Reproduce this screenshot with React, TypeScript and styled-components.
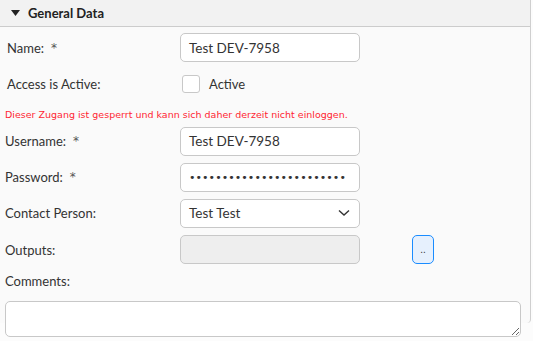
import React from "react";
import styled, { createGlobalStyle } from "styled-components";

const Global = createGlobalStyle`
  html, body { margin: 0; padding: 0; background: #fcfcfc; }
  body { font-family: Lato, "Noto Sans", sans-serif; color: #333; }
  #root { min-height: 341px; }
  * { box-sizing: border-box; }
`;

const Panel = styled.section`
  width: 531px;
  height: 323px;
  background: #fafafa;
  border-right: 1px solid #cfcfcf;
  border-bottom-right-radius: 4px;
`;

const Header = styled.div`
  height: 27px;
  background: #f2f2f2;
  border-bottom: 1px solid #cccccc;
  display: flex;
  align-items: center;
  padding-left: 11px;
  gap: 8px;
  font-size: 13px;
  font-weight: 700;
  color: #222;
`;

const Body = styled.div`
  padding: 6px 0 0 5px;
  display: flex;
  flex-direction: column;
`;

const Row = styled.div<{ $h: number }>`
  display: grid;
  grid-template-columns: 175px 180px auto;
  align-items: center;
  height: ${(p) => p.$h}px;
`;

const Label = styled.label<{ $shift?: number }>`
  font-size: 13px;
  color: #333;
  padding-left: ${(p) => p.$shift ?? 0}px;
  display: flex;
  align-items: center;
  gap: 7px;
`;

const Star = styled.span`
  font-family: "DejaVu Sans", sans-serif;
  font-size: 12px;
  color: #555;
`;

const Input = styled.div<{ $disabled?: boolean }>`
  height: 29px;
  border: 1px solid #c8c8c8;
  border-radius: 5px;
  background: ${(p) => (p.$disabled ? "#eeeeee" : "#ffffff")};
  display: flex;
  align-items: center;
  padding: 0 9px 0 8px;
  font-size: 13.5px;
  color: #333;
  justify-content: space-between;
`;

const Dots = styled.span`
  font-family: "DejaVu Sans", sans-serif;
  font-size: 11px;
  letter-spacing: 0.05px;
  color: #333;
`;

const CheckWrap = styled.div`
  display: flex;
  align-items: center;
  gap: 9px;
  padding-left: 2px;
  font-size: 13px;
`;

const Box = styled.span`
  width: 18px;
  height: 18px;
  border: 1px solid #c8c8c8;
  border-radius: 3px;
  background: #fff;
`;

const Error = styled.div`
  height: 18px;
  display: flex;
  align-items: center;
  font-family: "DejaVu Sans", Verdana, sans-serif;
  font-size: 9.5px;
  color: #ff1f33;
`;

const SmallBtn = styled.button`
  justify-self: start;
  margin-left: 52px;
  width: 22px;
  height: 29px;
  border: 1.5px solid #1a8cff;
  border-radius: 5px;
  background: #e6f0fd;
  font-size: 10px;
  color: #333;
  padding: 0;
  line-height: 1;
`;

const CommentsLabel = styled.div`
  font-size: 13px;
  height: 26px;
  display: flex;
  align-items: center;
  color: #333;
`;

const TextArea = styled.textarea`
  display: block;
  margin: 7px 0 0 0;
  padding: 0;
  width: 516px;
  height: 36px;
  min-height: 36px;
  flex-shrink: 0;
  border: 1px solid #c8c8c8;
  border-radius: 5px;
  background: #fff;
  resize: vertical;
`;

export default function App() {
  return (
    <>
      <Global />
      <Panel>
        <Header>
          <svg width="9" height="6" viewBox="0 0 9 6">
            <path d="M0 0 H9 L4.5 6 Z" fill="#222" />
          </svg>
          General Data
        </Header>
        <Body>
          <Row $h={29}>
            <Label $shift={2}>
              Name: <Star>*</Star>
            </Label>
            <Input>Test DEV-7958</Input>
          </Row>
          <Row $h={43}>
            <Label $shift={2}>Access is Active:</Label>
            <CheckWrap>
              <Box />
              Active
            </CheckWrap>
          </Row>
          <Error>Dieser Zugang ist gesperrt und kann sich daher derzeit nicht einloggen.</Error>
          <Row $h={36}>
            <Label>
              Username: <Star>*</Star>
            </Label>
            <Input>Test DEV-7958</Input>
          </Row>
          <Row $h={36}>
            <Label>
              Password: <Star>*</Star>
            </Label>
            <Input>
              <Dots>••••••••••••••••••••••••</Dots>
            </Input>
          </Row>
          <Row $h={36}>
            <Label>Contact Person:</Label>
            <Input>
              Test Test
              <svg width="12" height="8" viewBox="0 0 12 8">
                <path d="M1 1.5 L6 6 L11 1.5" fill="none" stroke="#333" strokeWidth="1.4" />
              </svg>
            </Input>
          </Row>
          <Row $h={37}>
            <Label>Outputs:</Label>
            <Input $disabled />
            <SmallBtn>..</SmallBtn>
          </Row>
          <CommentsLabel>Comments:</CommentsLabel>
          <TextArea />
        </Body>
      </Panel>
    </>
  );
}
